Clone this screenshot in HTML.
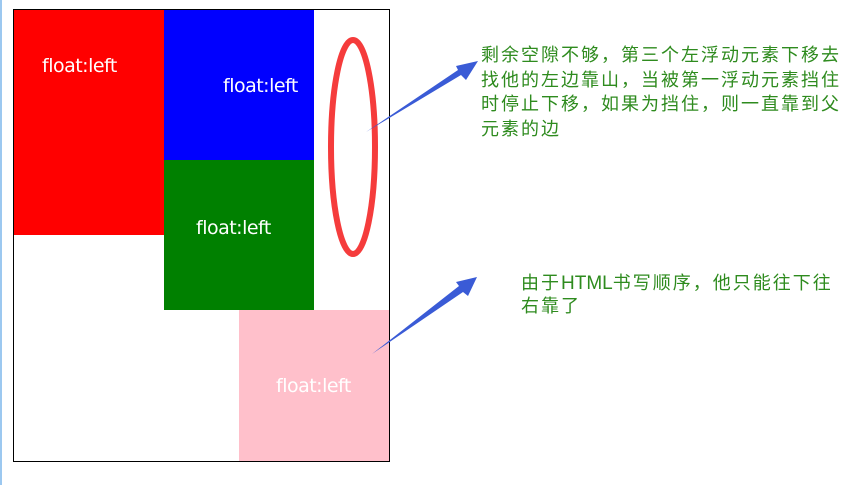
<!DOCTYPE html>
<html><head><meta charset="utf-8"><style>
body{margin:0;width:848px;height:485px;background:#fff;position:relative;overflow:hidden;font-family:"Liberation Sans","DejaVu Sans",sans-serif}
.b{position:absolute}
.lbl{position:absolute;color:#fff;font-size:19px;font-family:"DejaVu Sans","Liberation Sans",sans-serif;letter-spacing:-0.5px}
.t{position:absolute;color:#2e8b1e;font-size:18px;line-height:24.5px;letter-spacing:2px;font-family:"Liberation Sans","Noto Sans CJK SC",sans-serif}
.h{letter-spacing:0;font-size:19px}
</style></head><body>
<div class="b" style="left:0;top:0;width:2px;height:485px;background:#9cc8f0"></div>
<div class="b" style="left:13px;top:9px;width:375px;height:451px;border:1px solid #000"></div>
<div class="b" style="left:14px;top:10px;width:150px;height:225px;background:#f00"></div>
<div class="b" style="left:164px;top:10px;width:150px;height:150px;background:#00f"></div>
<div class="b" style="left:164px;top:160px;width:150px;height:150px;background:#008000"></div>
<div class="b" style="left:239px;top:310px;width:150px;height:151px;background:#ffc0cb"></div>
<div class="lbl" style="left:42px;top:55px">float:left</div>
<div class="lbl" style="left:223px;top:75px">float:left</div>
<div class="lbl" style="left:196px;top:217px">float:left</div>
<div class="lbl" style="left:276px;top:375px">float:left</div>
<svg class="b" style="left:0;top:0" width="848" height="485">
<ellipse cx="353" cy="147" rx="22" ry="107" fill="none" stroke="#f53c3c" stroke-width="6"/>
<polygon points="366,132 458,70 456,66 478,61 466,80 461,75" fill="#3a5bd6"/>
<polygon points="372,354 459,286 456,282 477,277 468,296 463,292" fill="#3a5bd6"/>
</svg>
<div class="t" style="left:481px;top:43px">剩余空隙不够，第三个左浮动元素下移去<br>找他的左边靠山，当被第一浮动元素挡住<br>时停止下移，如果为挡住，则一直靠到父<br>元素的边</div>
<div class="t" style="left:521px;top:272px;line-height:23px">由于<span class="h">HTML</span>书写顺序，他只能往下往<br>右靠了</div>
</body></html>
